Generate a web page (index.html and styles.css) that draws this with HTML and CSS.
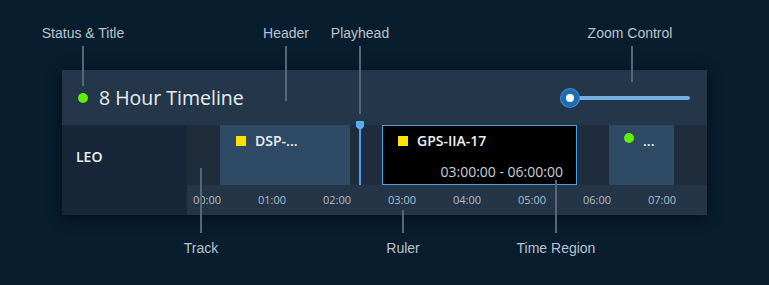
FILE: index.html
```html
<!DOCTYPE html>
<html>
<head>
<meta charset="utf-8">
<link rel="stylesheet" href="styles.css">
</head>
<body>
<div class="page">
  <div class="panel">
    <div class="header">
      <span class="status-dot"></span>
      <span class="title">8 Hour Timeline</span>
      <div class="slider">
        <span class="slider-track"></span>
        <span class="slider-thumb"></span>
      </div>
    </div>
    <div class="body">
      <div class="label-col"><span class="track-label">LEO</span></div>
      <div class="timeline">
        <div class="track">
          <div class="region" style="left:33px;width:130px">
            <span class="sq"></span><span class="region-name">DSP-...</span>
          </div>
          <div class="region selected" style="left:195px;width:195px">
            <span class="sq"></span><span class="region-name">GPS-IIA-17</span>
            <span class="region-time">03:00:00 - 06:00:00</span>
          </div>
          <div class="region" style="left:422px;width:65px">
            <span class="dot"></span><span class="region-name">...</span>
          </div>
          <div class="playhead" style="left:173px"></div>
        </div>
        <div class="ruler">
          <span class="tick">00:00</span>
          <span class="tick">01:00</span>
          <span class="tick">02:00</span>
          <span class="tick">03:00</span>
          <span class="tick">04:00</span>
          <span class="tick">05:00</span>
          <span class="tick">06:00</span>
          <span class="tick">07:00</span>
        </div>
      </div>
    </div>
  </div>

  <div class="callout top c-status"><span class="c-text">Status &amp; Title</span><span class="c-line"></span></div>
  <div class="callout top c-header"><span class="c-text">Header</span><span class="c-line"></span></div>
  <div class="callout top c-playhead"><span class="c-text">Playhead</span><span class="c-line"></span></div>
  <div class="callout top c-zoom"><span class="c-text">Zoom Control</span><span class="c-line"></span></div>
  <div class="callout bottom c-track"><span class="c-line"></span><span class="c-text">Track</span></div>
  <div class="callout bottom c-ruler"><span class="c-line"></span><span class="c-text">Ruler</span></div>
  <div class="callout bottom c-region"><span class="c-line"></span><span class="c-text">Time Region</span></div>
</div>
</body>
</html>
```
FILE: styles.css
```css
html, body {
  margin: 0;
  padding: 0;
  background: #081d2e;
  width: 769px;
  height: 285px;
  overflow: hidden;
}
.page {
  position: relative;
  width: 769px;
  height: 285px;
  padding-top: 70px;
  box-sizing: border-box;
}
.panel {
  margin-left: 62px;
  width: 645px;
  box-shadow: 0 2px 12px rgba(0, 0, 0, 0.55);
  font-family: "Open Sans", sans-serif;
}
.header {
  height: 55px;
  background: #243649;
  display: flex;
  align-items: center;
  padding: 0 17px 0 16px;
}
.status-dot {
  width: 10px;
  height: 10px;
  border-radius: 50%;
  background: #5ff000;
  margin-top: 1px;
}
.title {
  margin-left: 11px;
  font-size: 19.5px;
  color: #e9eef2;
}
.slider {
  margin-left: auto;
  width: 129px;
  height: 20px;
  position: relative;
  display: flex;
  align-items: center;
}
.slider-track {
  flex: 1;
  height: 4px;
  background: #75aee0;
  border-radius: 2px;
  margin-left: 9px;
}
.slider-thumb {
  position: absolute;
  left: 0;
  top: 1px;
  width: 8px;
  height: 8px;
  border-radius: 50%;
  background: #ffffff;
  border: 5px solid #1f6db0;
  box-shadow: 0 0 0 1px #3c8ed8;
}
.body {
  display: flex;
  height: 90px;
}
.label-col {
  width: 125px;
  background: #172739;
  padding: 20px 0 0 14px;
  box-sizing: border-box;
}
.track-label {
  font-size: 14px;
  font-weight: 600;
  color: #f0f3f6;
}
.timeline {
  width: 520px;
  display: flex;
  flex-direction: column;
}
.track {
  position: relative;
  height: 60px;
  background: #1e2c3c;
}
.region {
  position: absolute;
  top: 0;
  height: 60px;
  background: #2f4a64;
  box-sizing: border-box;
  padding: 8px 0 0 16px;
  display: flex;
  align-items: flex-start;
}
.region.selected {
  background: #000000;
  border: 1px solid #4aa0e6;
  padding: 7px 0 0 15px;
  flex-wrap: wrap;
}
.sq {
  width: 10px;
  height: 10px;
  background: #ffe100;
  margin-top: 3px;
}
.dot {
  width: 10px;
  height: 10px;
  border-radius: 50%;
  background: #5ff000;
  margin: 0 0 0 -1px;
}
.region-name {
  margin-left: 9px;
  font-size: 14px;
  font-weight: 600;
  color: #eef2f5;
  line-height: 16px;
}
.region-time {
  width: 100%;
  text-align: right;
  padding-right: 13px;
  box-sizing: border-box;
  margin-top: 11px;
  font-size: 14px;
  color: #c9d1d8;
  line-height: 16px;
}
.playhead {
  position: absolute;
  top: -4px;
  width: 2px;
  height: 64px;
  margin-left: -1px;
  background: #4aa0ee;
}
.playhead::before {
  content: "";
  position: absolute;
  left: -3px;
  top: 0;
  width: 8px;
  height: 6px;
  background: #5aaef5;
  border-radius: 1px 1px 0 0;
}
.playhead::after {
  content: "";
  position: absolute;
  left: -3px;
  top: 6px;
  border-left: 4px solid transparent;
  border-right: 4px solid transparent;
  border-top: 3px solid #5aaef5;
}
.ruler {
  height: 30px;
  background: #233547;
  display: flex;
}
.tick {
  width: 65px;
  flex: none;
  padding: 7px 0 0 6px;
  box-sizing: border-box;
  font-size: 11px;
  color: #b3bec9;
}
.callout {
  position: absolute;
  display: flex;
  flex-direction: column;
  align-items: center;
  font-family: "Liberation Sans", Arial, sans-serif;
  font-size: 14px;
  color: #b9c4cd;
}
.c-line {
  width: 2px;
  background: #55687a;
}
.top .c-text { line-height: 16px; margin-bottom: 5px; }
.bottom .c-text { line-height: 16px; margin-top: 7px; }
.c-status { left: 36px; top: 25px; width: 94px; }
.c-status .c-line { height: 40px; margin-left: -1px; }
.c-header { left: 256px; top: 25px; width: 60px; }
.c-header .c-line { height: 55px; }
.c-playhead { left: 320px; top: 25px; width: 80px; }
.c-playhead .c-line { height: 68px; }
.c-zoom { left: 575px; top: 25px; width: 110px; }
.c-zoom .c-line { height: 36px; margin-left: 4px; }
.c-track { left: 170px; top: 168px; width: 62px; }
.c-track .c-line { height: 65px; }
.c-ruler { left: 374px; top: 210px; width: 58px; }
.c-ruler .c-line { height: 23px; }
.c-region { left: 509px; top: 180px; width: 94px; }
.c-region .c-line { height: 53px; }
```
